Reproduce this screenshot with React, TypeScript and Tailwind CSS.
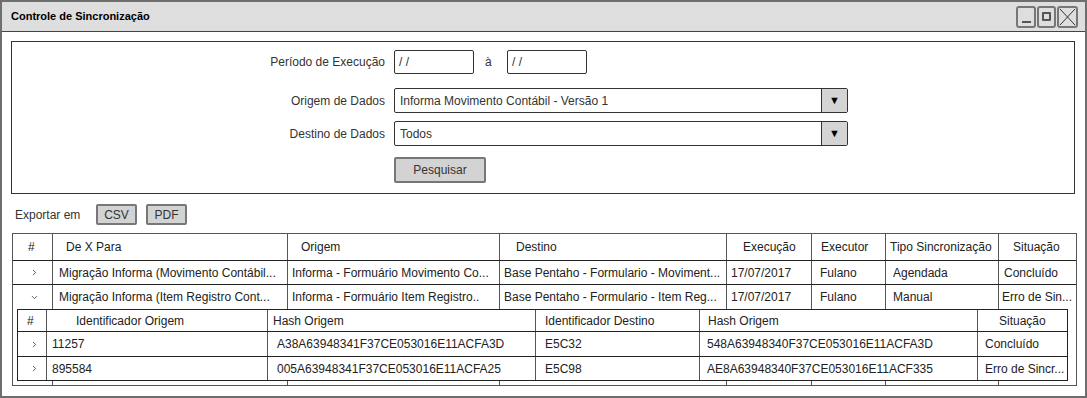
import { ChevronRight, ChevronDown } from 'lucide-react'

const outerCols = 'grid grid-cols-[39px_235px_212px_227px_85px_74px_113px_78px]'
const innerCols = 'grid grid-cols-[28px_221px_268px_164px_278px_90px]'

function Cell({ children, className = '' }: { children?: React.ReactNode; className?: string }) {
  return (
    <div className={`flex items-center overflow-hidden whitespace-nowrap border-l border-[#555] first:border-l-0 ${className}`}>
      {children}
    </div>
  )
}

function Select({ value }: { value: string }) {
  return (
    <div className="flex h-[25px] w-[454px] items-stretch rounded-[2px] border border-[#333] bg-white">
      <div className="flex flex-1 items-center pl-[5px]">{value}</div>
      <div className="flex w-[26px] items-center justify-center border-l border-[#333] bg-[#d4d4d4] text-[11px] text-black">
        ▼
      </div>
    </div>
  )
}

function GrayButton({ label, className = '' }: { label: string; className?: string }) {
  return (
    <div className={`flex items-center justify-center rounded-[2px] border-2 border-[#777] bg-[#d3d3d3] ${className}`}>
      {label}
    </div>
  )
}

export default function App() {
  return (
    <div className="flex h-[398px] w-[1087px] flex-col border-2 border-[#6e6e6e] bg-white font-['Liberation_Sans',sans-serif] text-[12px] text-[#222]">
      {/* barra de título */}
      <div className="flex h-[30px] items-center justify-between border-b border-[#444] bg-[#dedede] pl-[9px] pr-[7px]">
        <span className="text-[11px] font-bold text-black">Controle de Sincronização</span>
        <div className="flex gap-[1px]">
          <div className="flex h-[22px] w-[20px] items-end justify-center rounded-[3px] border-2 border-[#777] pb-[3px]">
            <div className="h-[2px] w-[9px] bg-[#555]" />
          </div>
          <div className="flex h-[22px] w-[19px] items-center justify-center rounded-[3px] border-2 border-[#777]">
            <div className="h-[9px] w-[9px] rounded-[1px] border-2 border-[#555]" />
          </div>
          <div className="flex h-[22px] w-[21px] items-center justify-center rounded-[3px] border-2 border-[#777]">
            <svg width="17" height="18" viewBox="0 0 17 18">
              <path d="M1 1 L16 17 M16 1 L1 17" stroke="#333" strokeWidth="1" fill="none" />
            </svg>
          </div>
        </div>
      </div>

      <div className="flex flex-1 flex-col pl-[9px] pt-[9px]">
        {/* filtros */}
        <div className="flex h-[153px] w-[1064px] flex-col border border-[#333] pt-[8px] text-[#333]">
          <div className="flex items-center">
            <div className="w-[374px] pr-[1px] text-right">Período de Execução</div>
            <div className="ml-[8px] flex h-[24px] w-[80px] items-center rounded-[2px] border border-[#333] pl-[4px]">/ /</div>
            <div className="w-[33px] pl-[11px]">à</div>
            <div className="flex h-[24px] w-[80px] items-center rounded-[2px] border border-[#333] pl-[4px]">/ /</div>
          </div>
          <div className="mt-[14px] flex items-center">
            <div className="w-[374px] pr-[1px] text-right">Origem de Dados</div>
            <div className="ml-[8px]">
              <Select value="Informa Movimento Contábil - Versão 1" />
            </div>
          </div>
          <div className="mt-[8px] flex items-center">
            <div className="w-[374px] pr-[1px] text-right">Destino de Dados</div>
            <div className="ml-[8px]">
              <Select value="Todos" />
            </div>
          </div>
          <div className="mt-[11px] flex">
            <GrayButton label="Pesquisar" className="ml-[382px] h-[26px] w-[92px]" />
          </div>
        </div>

        {/* exportação */}
        <div className="mt-[10px] flex h-[21px] items-center pl-[4px] text-[#333]">
          <span className="w-[81px]">Exportar em</span>
          <GrayButton label="CSV" className="h-[21px] w-[41px]" />
          <GrayButton label="PDF" className="ml-[9px] h-[21px] w-[41px]" />
        </div>

        {/* tabela */}
        <div className="ml-[1px] mt-[8px] w-[1065px] border border-[#555]">
          <div className={`${outerCols} h-[27px] border-b border-[#222]`}>
            <Cell className="pl-[15px]">#</Cell>
            <Cell className="pl-[13px]">De X Para</Cell>
            <Cell className="pl-[13px]">Origem</Cell>
            <Cell className="pl-[16px]">Destino</Cell>
            <Cell className="pl-[16px]">Execução</Cell>
            <Cell className="pl-[9px]">Executor</Cell>
            <Cell className="pl-[4px]">Tipo Sincronização</Cell>
            <Cell className="pl-[14px]">Situação</Cell>
          </div>
          <div className={`${outerCols} h-[24px] border-b border-[#222]`}>
            <Cell className="pl-[17px]">
              <ChevronRight size={9} strokeWidth={2} />
            </Cell>
            <Cell className="pl-[6px]">Migração Informa (Movimento Contábil...</Cell>
            <Cell className="pl-[4px]">Informa - Formuário Movimento Co...</Cell>
            <Cell className="pl-[4px]">Base Pentaho - Formulario - Moviment...</Cell>
            <Cell className="pl-[4px]">17/07/2017</Cell>
            <Cell className="pl-[8px]">Fulano</Cell>
            <Cell className="pl-[7px]">Agendada</Cell>
            <Cell className="pl-[5px]">Concluído</Cell>
          </div>
          <div className={`${outerCols} h-[24px]`}>
            <Cell className="pl-[17px]">
              <ChevronDown size={9} strokeWidth={2} />
            </Cell>
            <Cell className="pl-[6px]">Migração Informa (Item Registro Cont...</Cell>
            <Cell className="pl-[4px]">Informa - Formuário Item Registro..</Cell>
            <Cell className="pl-[4px]">Base Pentaho - Formulario - Item Reg...</Cell>
            <Cell className="pl-[4px]">17/07/2017</Cell>
            <Cell className="pl-[8px]">Fulano</Cell>
            <Cell className="pl-[7px]">Manual</Cell>
            <Cell className="pl-[3px]">Erro de Sin...</Cell>
          </div>

          {/* linha expandida */}
          <div className={`${outerCols} relative h-[76px]`}>
            {Array.from({ length: 8 }).map((_, i) => (
              <Cell key={i} />
            ))}
            <div className="absolute left-[4px] top-0 w-[1051px] border border-[#222] bg-white">
              <div className={`${innerCols} h-[22px] border-b border-[#222]`}>
                <Cell className="pl-[9px]">#</Cell>
                <Cell className="pl-[29px]">Identificador Origem</Cell>
                <Cell className="pl-[5px]">Hash Origem</Cell>
                <Cell className="pl-[9px]">Identificador Destino</Cell>
                <Cell className="pl-[8px]">Hash Origem</Cell>
                <Cell className="pl-[21px]">Situação</Cell>
              </div>
              <div className={`${innerCols} h-[25px] border-b border-[#222]`}>
                <Cell className="pl-[12px]">
                  <ChevronRight size={9} strokeWidth={2} />
                </Cell>
                <Cell className="pl-[5px]">11257</Cell>
                <Cell className="pl-[9px]">A38A63948341F37CE053016E11ACFA3D</Cell>
                <Cell className="pl-[9px]">E5C32</Cell>
                <Cell className="pl-[7px]">548A63948340F37CE053016E11ACFA3D</Cell>
                <Cell className="pl-[7px]">Concluído</Cell>
              </div>
              <div className={`${innerCols} h-[23px]`}>
                <Cell className="pl-[12px]">
                  <ChevronRight size={9} strokeWidth={2} />
                </Cell>
                <Cell className="pl-[5px]">895584</Cell>
                <Cell className="pl-[9px]">005A63948341F37CE053016E11ACFA25</Cell>
                <Cell className="pl-[9px]">E5C98</Cell>
                <Cell className="pl-[7px]">AE8A63948340F37CE053016E11ACF335</Cell>
                <Cell className="pl-[7px]">Erro de Sincr...</Cell>
              </div>
            </div>
          </div>
        </div>
      </div>
    </div>
  )
}
